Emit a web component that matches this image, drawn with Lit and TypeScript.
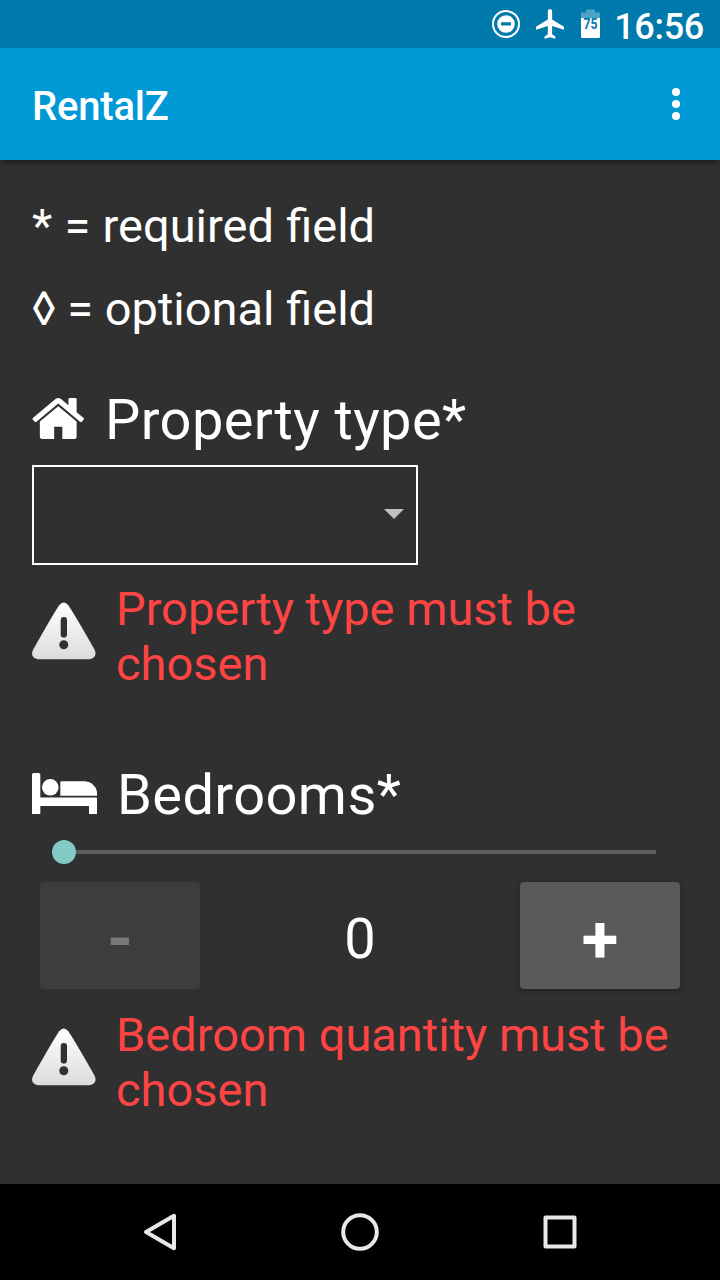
import { LitElement, html, css, svg } from "lit";
import { customElement, property } from "lit/decorators.js";

@customElement("status-bar")
class StatusBar extends LitElement {
  static styles = css`
    :host { display: flex; justify-content: flex-end; height: 48px; background: #007aac; padding-right: 16px; box-sizing: border-box; }
    .icons { display: block; flex: none; }
    .level { font: 700 15px Roboto, sans-serif; fill: #007aac; }
    .clock { font: 500 36px/42px Roboto, sans-serif; letter-spacing: -0.3px; color: #fff; margin: 6px 0 0 12px; }
  `;
  render() {
    return html`
      <svg class="icons" width="112" height="48" viewBox="490 0 112 48">
        <circle cx="506" cy="24" r="13" fill="none" stroke="#fff" stroke-width="2"></circle>
        <circle cx="506" cy="24" r="8.8" fill="#fff"></circle>
        <rect x="501" y="22.3" width="10" height="3.2" fill="#007aac"></rect>
        <path fill="#fff" transform="translate(532.5 6.2) scale(1.475)"
          d="M21.3 16v-2l-8-5V3.5C13.3 2.67 12.68 1.9 11.85 1.9S10.4 2.67 10.4 3.5V9l-8 5v2l8-2.5V19l-2.2 1.6V22l3.65-1 3.65 1v-1.4L13.3 19v-5.5l8 2.5z"></path>
        <path fill="#fff" opacity=".3" d="M586 9.500h9v3h5V18h-19v-5.500h5z"></path>
        <path fill="#fff" d="M581 18h19v18.500q0 1.500-1.500 1.500h-16q-1.500 0-1.500-1.500z"></path>
        <text class="level" x="590.500" y="29" text-anchor="middle" textLength="14" lengthAdjust="spacingAndGlyphs">75</text>
      </svg>
      <div class="clock">16:56</div>`;
  }
}

@customElement("title-bar")
class TitleBar extends LitElement {
  static styles = css`
    :host { display: flex; justify-content: space-between; align-items: center; height: 112px; padding: 0 40px 0 32px;
      box-sizing: border-box; background: #0099d6; box-shadow: 0 4px 4px -1px rgba(0,0,0,.35); position: relative; }
    .title { font: 500 40px/48px Roboto, sans-serif; letter-spacing: -0.2px; color: #fff; padding-top: 6px; }
    .more { display: block; }
  `;
  render() {
    return html`<div class="title">RentalZ</div>
      <svg class="more" width="8" height="32" fill="#fff">
        <circle cx="4" cy="4" r="4"></circle><circle cx="4" cy="16" r="4"></circle><circle cx="4" cy="28" r="4"></circle>
      </svg>`;
  }
}

@customElement("field-error")
class FieldError extends LitElement {
  @property() text = "";
  static styles = css`
    :host { display: flex; gap: 20px; height: 110px; }
    .sign { display: block; flex: none; margin-top: 21px; }
    .text { font: 400 47px/55px Roboto, sans-serif; color: #ff4444; }
  `;
  render() {
    return html`<svg class="sign" width="64" height="58" viewBox="0 0 64 58">
        <defs><linearGradient id="g" x1="0" y1="0" x2="0" y2="1"><stop offset="0" stop-color="#fff"></stop><stop offset="1" stop-color="#dcdcdc"></stop></linearGradient></defs>
        <path fill="url(#g)" d="M27.200 3.300Q31.700-2.500 36.300 3.300Q40.500 9 62.500 47.500Q66 55.500 57.500 57.200H6Q-2.500 55.500 1.200 47.500Q23 9 27.200 3.300Z"></path>
        <rect x="28.700" y="15" width="6.300" height="20.500" rx="3.100" fill="#303030"></rect>
        <circle cx="31.800" cy="42.700" r="4.500" fill="#303030"></circle>
      </svg><div class="text">${this.text}</div>`;
  }
}

@customElement("nav-bar")
class NavBar extends LitElement {
  static styles = css`
    :host { display: grid; grid-template-columns: repeat(3, 200px); justify-content: center; align-items: center; justify-items: center; height: 96px; background: #000; }
    .key { display: block; fill: none; stroke: #e8e8e8; stroke-width: 4; stroke-linejoin: round; }
  `;
  render() {
    return html`
      <svg class="key" width="40" height="40"><path d="M6 20L34 3.800V36.200Z"></path></svg>
      <svg class="key" width="40" height="40"><circle cx="20" cy="20" r="16.800"></circle></svg>
      <svg class="key" width="40" height="40"><rect x="5.500" y="5.500" width="29" height="29"></rect></svg>`;
  }
}

const house = svg`<path fill="#fff" d="M1408 992v480q0 26-19 45t-45 19h-384v-384h-256v384h-384q-26 0-45-19t-19-45v-480q0-1 .5-3t.5-3l575-474 575 474q1 2 1 6zm223-69l-62 74q-8 9-21 11h-3q-13 0-21-7l-692-577-692 577q-12 8-24 7-13-2-21-11l-62-74q-8-10-7-23.5t11-21.5l719-599q32-26 76-26t76 26l244 204v-195q0-14 9-23t23-9h192q14 0 23 9t9 23v408l219 182q10 8 11 21.5t-7 23.5z"></path>`;

@customElement("app-root")
class AppRoot extends LitElement {
  static styles = css`
    :host { display: flex; flex-direction: column; width: 720px; height: 1280px; background: #303030; color: #fff; font-family: Roboto, sans-serif; overflow: hidden; }
    .form { flex: 1; display: flex; flex-direction: column; padding: 38px 32px 0; }
    .note { font-size: 47px; line-height: 55px; height: 83px; white-space: pre; word-spacing: 0.6px; }
    .optional { word-spacing: 0; }
    .heading { display: flex; align-items: flex-start; height: 66px; font-size: 56px; line-height: 66px; letter-spacing: 0.4px; }
    .first { margin-top: 23px; }
    .second { margin-top: 71px; }
    .house { display: block; margin: 11px 21px 0 0; }
    .bed { display: block; margin: 11px 19px 0 0; }
    .select { display: flex; align-items: center; justify-content: flex-end; box-sizing: border-box; width: 386px; height: 100px;
      border: 2px solid #fff; margin: 12px 0 16px; padding: 0 12px 2px 0; }
    .arrow { display: block; }
    .slider { display: flex; align-items: center; height: 24px; margin: 12px 32px 18px 20px; }
    .thumb { width: 24px; height: 24px; border-radius: 50%; background: #80cbc4; }
    .track { flex: 1; height: 4px; background: #5c5c5c; }
    .stepper { display: grid; grid-template-columns: 160px 1fr 160px; grid-template-rows: 107px; height: 107px; margin: 0 8px 18px; text-align: center; font-size: 56px; line-height: 115px; }
    .btn { border-radius: 4px; background: #5a5a5c; font-weight: 700; font-size: 67px; line-height: 114px; box-shadow: 0 2px 5px rgba(0,0,0,.35); }
    .off { background: #3d3d3d; color: #787878; font-size: 66px; line-height: 115px; box-shadow: none; }
  `;
  render() {
    return html`
      <status-bar></status-bar>
      <title-bar></title-bar>
      <main class="form">
        <div class="note">* = required field</div>
        <div class="note optional">◊ = optional field</div>
        <div class="heading first">
          <svg class="house" width="52" height="41" viewBox="10 253 1629 1284">${house}</svg>Property type*
        </div>
        <div class="select"><svg class="arrow" width="20" height="10"><path fill="#c1c1c1" d="M0 0H20L10 10Z"></path></svg></div>
        <field-error text="Property type must be chosen"></field-error>
        <div class="heading second">
          <svg class="bed" width="66" height="41" viewBox="0 0 66 41" fill="#fff">
            <path d="M0 1.500Q0 0 1.500 0H6.700Q8.300 0 8.300 1.500V24.400H64Q65 24.400 65 25.500V41H57V33H8.300V41H0Z"></path>
            <circle cx="18.300" cy="14.300" r="8.300"></circle>
            <path d="M28.300 9.300Q28.300 8.200 29.500 8.200H53Q63 9 65 19V22.700H28.300Z"></path>
          </svg>Bedrooms*
        </div>
        <div class="slider"><div class="thumb"></div><div class="track"></div></div>
        <div class="stepper">
          <div class="btn off">-</div><div class="count">0</div><div class="btn">+</div>
        </div>
        <field-error text="Bedroom quantity must be chosen"></field-error>
      </main>
      <nav-bar></nav-bar>`;
  }
}
